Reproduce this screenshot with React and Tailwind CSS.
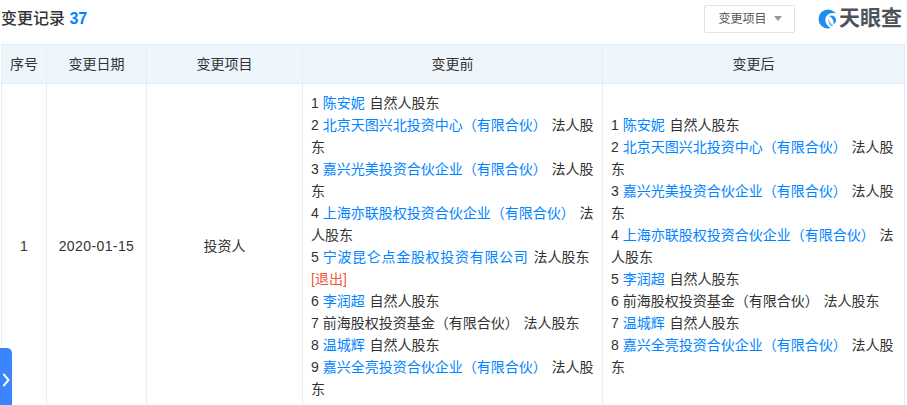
const F = { fontFamily: '"Liberation Sans","Noto Sans CJK SC",sans-serif' };

const before = [
  ["陈安妮", "自然人股东"],
  ["北京天图兴北投资中心（有限合伙）", "法人股东"],
  ["嘉兴光美投资合伙企业（有限合伙）", "法人股东"],
  ["上海亦联股权投资合伙企业（有限合伙）", "法人股东"],
  ["宁波昆仑点金股权投资有限公司", "法人股东", true],
  ["李润超", "自然人股东"],
  ["前海股权投资基金（有限合伙）", "法人股东", false, true],
  ["温城辉", "自然人股东"],
  ["嘉兴全亮投资合伙企业（有限合伙）", "法人股东"],
];
const after = [
  ["陈安妮", "自然人股东"],
  ["北京天图兴北投资中心（有限合伙）", "法人股东"],
  ["嘉兴光美投资合伙企业（有限合伙）", "法人股东"],
  ["上海亦联股权投资合伙企业（有限合伙）", "法人股东"],
  ["李润超", "自然人股东"],
  ["前海股权投资基金（有限合伙）", "法人股东", false, true],
  ["温城辉", "自然人股东"],
  ["嘉兴全亮投资合伙企业（有限合伙）", "法人股东"],
];

function Holders({ items }) {
  return (
    <div>
      {items.map(([name, kind, quit, plain], i) => (
        <div key={i}>
          {i + 1}{" "}
          <span className={(plain ? "" : "text-[#0084ff] ") + (quit ? "tracking-[0.7px]" : "")}>{name}</span>{" "}
          <span className="ml-px">{kind}</span>
          {quit && <span className="text-[#f0563d]"> [退出]</span>}
        </div>
      ))}
    </div>
  );
}

export default function App() {
  const th = "border border-[#e4eef6] bg-[#eef5fb] font-normal text-center h-[39px] p-0";
  const td = "border border-[#e4eef6] text-center p-0";
  return (
    <div style={F} className="relative h-[405px] w-[907px] overflow-hidden bg-white text-[14px] leading-[22px] text-[#333]">
      <div className="flex h-[44px] items-center justify-between pl-px pr-[5px] pb-[7px]">
        <div className="text-[16px] font-medium text-[#333]">
          变更记录 <span className="font-bold text-[#0084ff]">37</span>
        </div>
        <div className="flex items-center">
          <div className="flex h-[28px] w-[91px] items-center justify-center gap-[7px] rounded-[2px] border border-[#e2e2e2] pl-px text-[12px] text-[#555]">
            变更项目
            <span className="h-0 w-0 border-x-[4px] border-t-[5px] border-x-transparent border-t-[#999]" />
          </div>
          <div className="ml-[23px] flex items-center">
            <svg width="20" height="20" viewBox="0 0 20 20" className="mr-px">
              <circle cx="10" cy="10" r="9.5" fill="#1e8cf0" />
              <path d="M20 5.500C16 3 11 3.500 8.500 7c-2 3-1.500 7 1.500 10 1.500 1.500 3 2.500 5 3H20z" fill="#fff" />
              <path d="M11 7c3-1.500 6 0 7 3 .5 2-.5 4-2.500 5.500 .5-3-.5-6.500-4.500-8.500z" fill="#1e8cf0" />
              <path d="M10.500 10c1 2.500 2.500 4.500 5 6.500-.8.5-1.500.8-2.500 1-2-1.500-3-4.500-2.500-7.500z" fill="#7fc0f5" />
            </svg>
            <span className="mb-[2px] text-[21px] font-bold leading-[24px] text-[#4d5359]">天眼查</span>
          </div>
        </div>
      </div>
      <table className="ml-px w-[903px] table-fixed border-collapse">
        <colgroup>
          <col className="w-[45px]" />
          <col className="w-[100px]" />
          <col className="w-[156px]" />
          <col className="w-[300px]" />
          <col className="w-[302px]" />
        </colgroup>
        <thead>
          <tr>
            <th className={th}>序号</th>
            <th className={th}>变更日期</th>
            <th className={th}>变更项目</th>
            <th className={th}>变更前</th>
            <th className={th}>变更后</th>
          </tr>
        </thead>
        <tbody>
          <tr>
            <td className={td}>1</td>
            <td className={td + " tracking-[0.4px]"}>2020-01-15</td>
            <td className={td}>投资人</td>
            <td className="border border-[#e4eef6] p-[8px] text-left"><Holders items={before} /></td>
            <td className="border border-[#e4eef6] p-[8px] text-left"><Holders items={after} /></td>
          </tr>
        </tbody>
      </table>
      <div className="absolute bottom-0 left-0 flex h-[57px] w-[12px] items-center justify-center rounded-tr-[5px] bg-[#3b84ff]">
        <svg width="9" height="16" viewBox="0 0 9 16" className="mt-[6px]">
          <path d="M1.500 2l5 6-5 6" fill="none" stroke="#fff" strokeWidth="2" />
        </svg>
      </div>
    </div>
  );
}
